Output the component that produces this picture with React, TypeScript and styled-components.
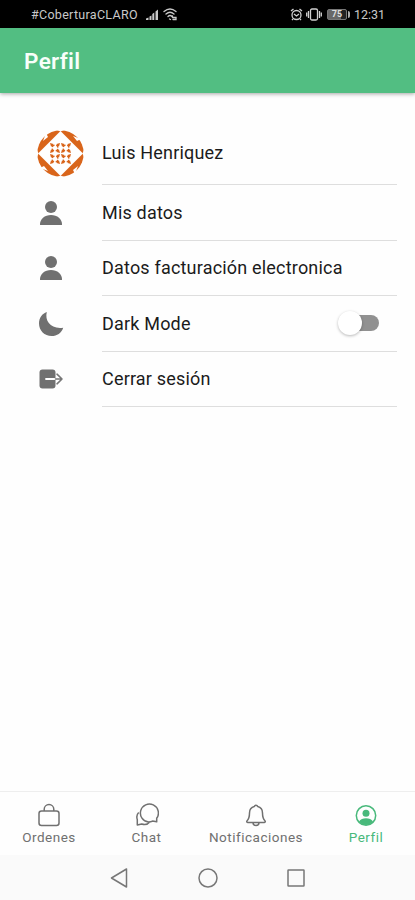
import React, { useState } from "react";
import styled, { createGlobalStyle } from "styled-components";

const GlobalStyle = createGlobalStyle`
  * { box-sizing: border-box; }
  body { margin: 0; background: #fff; font-family: Roboto, "Liberation Sans", sans-serif; }
  svg { display: block; flex: none; }
`;

const Screen = styled.div`
  width: 415px;
  height: 900px;
  display: flex;
  flex-direction: column;
  overflow: hidden;
  background: #fefefe;
`;

const StatusBar = styled.div`
  height: 28px;
  flex: none;
  display: flex;
  align-items: center;
  padding: 1px 30px 0 31px;
  background: #000;
  color: #c9c9c9;
  font-size: 12.5px;
`;

const Carrier = styled.span`
  width: 114px;
  font-size: 12.5px;
  letter-spacing: 0.3px;
  white-space: nowrap;
`;

const StatusGroup = styled.div`
  display: flex;
  align-items: center;
  gap: 4px;
`;

const StatusRight = styled(StatusGroup)`
  margin-left: auto;
  gap: 3px;
`;

const Battery = styled.div`
  display: flex;
  align-items: center;
  gap: 1px;
  margin: 0 1px 0 2px;
  &::after { content: ""; width: 2px; height: 7px; border-radius: 0 2px 2px 0; background: #aaa; }
`;

const Charge = styled.span`
  width: 20px;
  height: 11px;
  border-radius: 2px;
  border: 1px solid #777;
  background: linear-gradient(90deg, #686868 75%, #222 75%);
  color: #ddd;
  font-size: 9px;
  line-height: 9px;
  font-weight: 700;
  text-align: center;
`;

const Clock = styled.span`
  width: 31px;
  letter-spacing: 0;
  white-space: nowrap;
`;

const Header = styled.header`
  height: 65px;
  flex: none;
  display: flex;
  align-items: center;
  padding: 1px 24px 0;
  background: #52be82;
  box-shadow: 0 1px 4px rgba(0, 0, 0, 0.35);
`;

const Title = styled.h1`
  margin: 0;
  color: #f8fffa;
  font-size: 22.5px;
  font-weight: 600;
  letter-spacing: 0.35px;
`;

const List = styled.main`
  flex: 1;
  padding: 29px 18px 0 37px;
`;

const Item = styled.div<{ $height: number }>`
  height: ${(p) => p.$height}px;
  display: flex;
  align-items: stretch;
`;

const Leading = styled.div`
  width: 65px;
  display: flex;
  align-items: center;
  padding-bottom: 1px;
`;

const ItemBody = styled.div`
  flex: 1;
  display: flex;
  align-items: center;
  justify-content: space-between;
  border-bottom: 1px solid #dedede;
  padding: 0 17px 1px 0;
`;

const ItemLabel = styled.span`
  color: #1b1b1b;
  font-size: 18px;
  letter-spacing: 0.19px;
  white-space: nowrap;
`;

const Toggle = styled.button<{ $on: boolean }>`
  width: 42px;
  height: 24px;
  padding: 0 1px 0 5px;
  border: 0;
  background: none;
  display: flex;
  align-items: center;
  &::before {
    content: "";
    width: 36px;
    height: 16px;
    border-radius: 8px;
    background: ${(p) => (p.$on ? "#52be82" : "#919191")};
  }
  &::after {
    content: "";
    flex: none;
    width: 24px;
    height: 24px;
    margin-left: ${(p) => (p.$on ? -22 : -41)}px;
    border-radius: 50%;
    background: #fff;
    box-shadow: 0 1px 3px rgba(0, 0, 0, 0.28);
  }
`;

const Tabs = styled.nav`
  height: 64px;
  flex: none;
  display: grid;
  grid-template-columns: 98px 97px 122px 98px;
  border-top: 1px solid #eeeeee;
`;

const Tab = styled.div<{ $active?: boolean }>`
  display: flex;
  flex-direction: column;
  align-items: center;
  padding-top: 11px;
  gap: 2px;
  color: ${(p) => (p.$active ? "#48b97b" : "#707070")};
  font-size: 13.5px;
  line-height: 16px;
  letter-spacing: 0.5px;
`;

const SystemNav = styled.div`
  height: 45px;
  flex: none;
  display: flex;
  align-items: center;
  justify-content: center;
  gap: 64px;
  padding: 1px 0 0;
  background: #fafafa;
  color: #777;
`;

const Signal = () => (
  <svg width="14" height="12" viewBox="0 0 14 12" fill="#c9c9c9">
    <path d="M1 11V9.500l2.500-1V11zM4.500 11V7.500l2-1V11zM7.300 11V5l2-1.500V11zM10.500 11V2.500L13 .5V11z" />
  </svg>
);

const Wifi = () => (
  <svg width="15" height="13" viewBox="0 0 15 13" fill="none" stroke="#c9c9c9" strokeWidth="1.3" strokeLinecap="round">
    <path d="M1 3.500Q7-1.500 13 3.500M3 6q4-3.500 8 0M5 8.500q2-2 4 0M6.500 11l1 .5M9.500 8v1.500h3.500v2h-3" />
  </svg>
);

const Alarm = () => (
  <svg width="13" height="13" viewBox="0 0 13 13" fill="none" stroke="#d0d0d0" strokeWidth="1.3">
    <circle cx="6.500" cy="7" r="4.500" />
    <path d="M1 3l2.500-2M12 3L9.500 1M4 6l2.500 2L9 6M3 11l-1 1M10 11l1 1" />
  </svg>
);

const Vibrate = () => (
  <svg width="16" height="13" viewBox="0 0 16 13" fill="none" stroke="#d0d0d0" strokeWidth="1.3">
    <rect x="4.500" y="1" width="7" height="11" rx="1.500" />
    <path d="M2.500 3v7M.7 4.500v4M13.500 3v7M15.300 4.500v4" />
  </svg>
);

const Motif = ({ x, y }: { x: number; y: number }) => (
  <g transform={`translate(${x} ${y})`}>
    <path d="M-5-5L-1.500-4-2-2-4-1.500zM5-5L4-1.500 2-2 1.500-4zM5 5L1.500 4 2 2 4 1.500zM-5 5L-4 1.500-2 2-1.500 4z" fill="#d9651b" />
    <circle r="3" fill="none" stroke="#d9651b" strokeWidth="1.300" strokeDasharray="3 1.71" strokeDashoffset="-.86" />
  </g>
);

const Avatar = () => (
  <svg width="47" height="47" viewBox="0 0 47 47">
    <circle cx="23.500" cy="23.500" r="23.200" fill="#d9651b" />
    <path d="M23.500 1L46 23.500 23.500 46 1 23.500z" fill="#fff" />
    <path d="M20 0h7l-3.500 1.500zM47 20v7l-1.500-3.500zM27 47h-7l3.500-1.500zM0 27v-7l1.500 3.500zM9 3l2 4-5 4zM44 9l-4 2-4-5zM38 44l-2-4 5-4zM3 38l4-2 4 5z" fill="#fff" />
    <Motif x={18} y={18} />
    <Motif x={29} y={18} />
    <Motif x={18} y={29} />
    <Motif x={29} y={29} />
  </svg>
);

const Person = () => (
  <svg width="28" height="28" viewBox="0 0 28 28" fill="#707070">
    <circle cx="14" cy="8" r="6" />
    <path d="M3 26c-.4-6 4.800-10 11-10s11.400 4 11 10z" />
  </svg>
);

const Moon = () => (
  <svg width="28" height="28" viewBox="0 0 28 28" fill="#707070">
    <path d="M9.800 2C7.500 11 14 19.500 26.200 17.700 24.500 23 20 26 14.600 26 7.500 26 2 20.500 2 13.500 2 8 5.200 3.500 9.800 2z" />
  </svg>
);

const Exit = () => (
  <svg width="28" height="28" viewBox="0 0 28 28">
    <rect x="2.500" y="4.500" width="16" height="19" rx="3" fill="#707070" />
    <path d="M9 14h10" stroke="#fff" strokeWidth="1.800" strokeLinecap="round" />
    <path d="M18.500 14H25M20 9.200l5 4.800-5 4.800" fill="none" stroke="#777" strokeWidth="1.600" strokeLinecap="round" strokeLinejoin="round" />
  </svg>
);

const Bag = () => (
  <svg width="24" height="24" viewBox="0 0 24 24" fill="none" stroke="currentColor" strokeWidth="1.500">
    <rect x="2" y="8" width="20" height="14.500" rx="2.500" />
    <path d="M7.200 8V6.300a4.800 4.800 0 0 1 9.600 0V8" />
  </svg>
);

const Chat = () => (
  <svg width="24" height="24" viewBox="0 0 24 24" fill="none" stroke="currentColor" strokeWidth="1.500" strokeLinejoin="round">
    <path d="M21.700 18.800v-3.500A9 9 0 1 0 13.500 19c1.600 0 2.900-.3 4-.9zM3.700 9.500C1.600 11.500 1.600 14.500 2.300 16.700V22l4.400-1c3 1 6 .5 8-2" />
  </svg>
);

const Bell = () => (
  <svg width="24" height="24" viewBox="0 0 24 24" fill="none" stroke="currentColor" strokeWidth="1.500" strokeLinejoin="round">
    <path d="M5.500 10C5.500 6 8 4 10.300 3.500a1.800 1.800 0 0 1 3.400 0C16 4 18.500 6 18.500 10c0 4.500.7 6 2.400 7.700.8.800.2 1.800-.8 1.800H3.900c-1 0-1.600-1-.8-1.800C4.800 16 5.500 14.500 5.500 10zM9 19.500a3 3 0 0 0 6 0" />
  </svg>
);

const ProfileCircle = () => (
  <svg width="24" height="24" viewBox="0 0 24 24">
    <circle cx="12" cy="12.500" r="9.700" fill="none" stroke="currentColor" strokeWidth="1.500" />
    <circle cx="12" cy="10.300" r="3.500" fill="currentColor" />
    <path d="M5 18.500c1.500-2.400 4-3.200 7-3.200s5.500.8 7 3.200c-3.500 4.500-10.500 4.500-14 0z" fill="currentColor" />
  </svg>
);

const items = [
  { label: "Luis Henriquez", icon: <Avatar />, height: 63 },
  { label: "Mis datos", icon: <Person />, height: 56 },
  { label: "Datos facturación electronica", icon: <Person />, height: 55 },
  { label: "Dark Mode", icon: <Moon />, height: 56, toggle: true },
  { label: "Cerrar sesión", icon: <Exit />, height: 55 },
];

export default function App() {
  const [dark, setDark] = useState(false);
  return (
    <Screen>
      <GlobalStyle />
      <StatusBar>
        <Carrier>#CoberturaCLARO</Carrier>
        <StatusGroup><Signal /><Wifi /></StatusGroup>
        <StatusRight>
          <Alarm /><Vibrate />
          <Battery><Charge>75</Charge></Battery>
          <Clock>12:31</Clock>
        </StatusRight>
      </StatusBar>
      <Header><Title>Perfil</Title></Header>
      <List>
        {items.map((item) => (
          <Item key={item.label} $height={item.height}>
            <Leading>{item.icon}</Leading>
            <ItemBody>
              <ItemLabel>{item.label}</ItemLabel>
              {item.toggle && (
                <Toggle $on={dark} role="switch" aria-checked={dark} aria-label={item.label} onClick={() => setDark(!dark)} />
              )}
            </ItemBody>
          </Item>
        ))}
      </List>
      <Tabs>
        <Tab><Bag />Ordenes</Tab>
        <Tab><Chat />Chat</Tab>
        <Tab><Bell />Notificaciones</Tab>
        <Tab $active><ProfileCircle />Perfil</Tab>
      </Tabs>
      <SystemNav>
        <svg width="24" height="24" viewBox="0 0 24 24" fill="none" stroke="currentColor" strokeWidth="1.500" strokeLinejoin="round"><path d="M18.500 3v18L3.500 12z" /></svg>
        <svg width="24" height="24" viewBox="0 0 24 24" fill="none" stroke="currentColor" strokeWidth="1.500"><circle cx="12" cy="12" r="9" /></svg>
        <svg width="24" height="24" viewBox="0 0 24 24" fill="none" stroke="currentColor" strokeWidth="1.500"><rect x="4" y="4" width="16" height="16" rx=".5" /></svg>
      </SystemNav>
    </Screen>
  );
}
